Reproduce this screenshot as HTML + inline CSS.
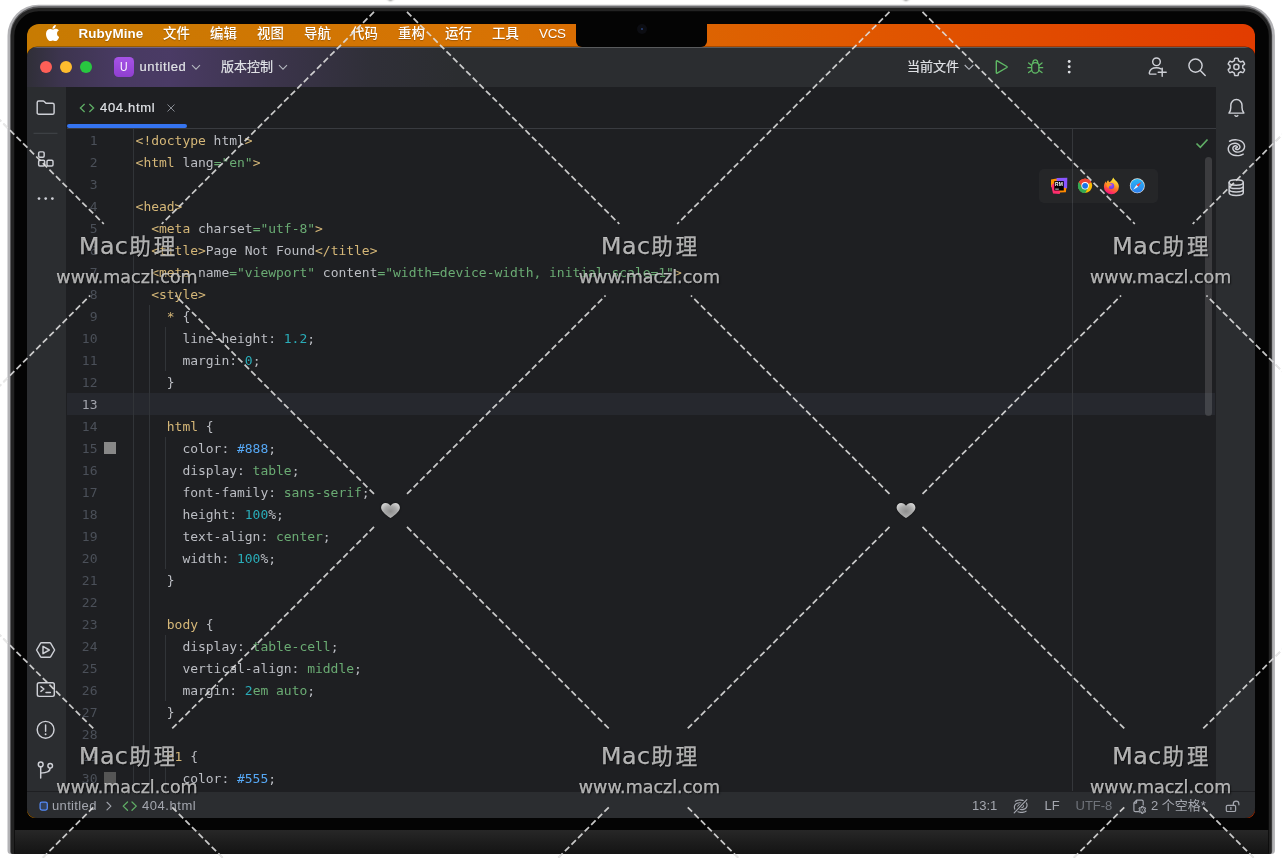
<!DOCTYPE html>
<html lang="zh">
<head>
<meta charset="utf-8">
<title>RubyMine - 404.html</title>
<style>
*{box-sizing:border-box;margin:0;padding:0}
html,body{width:1282px;height:858px;overflow:hidden;background:#fff}
body{position:relative;font-family:"Liberation Sans","Noto Sans CJK SC",sans-serif;font-size:13px;color:#dfe1e5}
.abs{position:absolute}
/* ---------- laptop frame ---------- */
#screen{will-change:transform;left:27px;top:24px;width:1228px;height:794px;border-radius:12px 12px 8px 8px;overflow:hidden;background:linear-gradient(90deg,#c77b02 0,#d87204 40%,#e05a00 65%,#e23c00 100%)}
/* ---------- menu bar ---------- */
#menubar{left:0;top:0;width:1228px;height:23px;color:#fff;text-shadow:0 1px 1px rgba(0,0,0,.25)}
#menubar span{position:absolute;top:-.5px;line-height:19px;font-size:13.4px;white-space:nowrap}
#notch{left:549px;top:-6px;width:131px;height:29px;border-radius:6px;background:#040404}
#cam{left:609.5px;top:0;width:10px;height:10px;border-radius:50%;background:#0c0d12}
#cam:after{content:"";position:absolute;left:4px;top:4px;width:2px;height:2px;border-radius:50%;background:#27407a}
/* ---------- IDE window ---------- */
#win{left:0;top:23px;width:1228px;height:771px;border-radius:10px;overflow:hidden;background:#1e1f22;box-shadow:0 0 0 .5px rgba(0,0,0,.5)}
#title{left:0;top:0;width:1228px;height:40px;background:#2b2d30}
#titleglow{left:0;top:0;width:430px;height:40px;background:linear-gradient(90deg,rgba(86,62,122,.10) 0,rgba(88,64,125,.40) 8%,rgba(90,66,128,.62) 21%,rgba(90,66,128,.66) 33%,rgba(84,63,116,.42) 56%,rgba(70,58,96,.16) 80%,rgba(43,45,48,0) 100%)}
#titletop{left:0;top:0;width:1228px;height:1px;background:rgba(255,255,255,.22)}
.tl{top:13.5px;width:12.5px;height:12.5px;border-radius:50%}
#title .t{-webkit-text-stroke:.2px;position:absolute;top:0;line-height:40px;font-size:13px;color:#dfe1e5;white-space:nowrap;letter-spacing:.62px}
#uicon{left:87px;top:10px;width:20px;height:20px;border-radius:4.5px;background:linear-gradient(180deg,#a653e6,#8f3fd0);color:#fff;font-size:13.4px;line-height:20px;text-align:center}
#uicon b{display:inline-block;font-weight:400;transform:scaleX(.78)}
#lstrip{left:0;top:40px;width:39px;height:704px;background:#2b2d30}
#rstrip{left:1189px;top:40px;width:39px;height:704px;background:#2b2d30}
#tabline{left:40px;top:81px;width:1149px;height:1px;background:#393b40}
#tabsel{left:40px;top:77px;width:120px;height:4px;border-radius:2px;background:#3574f0}
#tab .t{-webkit-text-stroke:.2px;position:absolute;line-height:16px;font-size:13px;color:#dfe1e5;letter-spacing:.7px}
#status{left:0;top:744px;width:1228px;height:27px;background:#2b2d30;border-top:1px solid #1e1f22;color:#a4a7af;font-size:13px}
#status span{position:absolute;top:0;line-height:27px;white-space:nowrap}
/* ---------- editor ---------- */
#editor{left:40px;top:82px;width:1149px;height:662px;overflow:hidden;background:#1e1f22}
#curline{left:0;top:264px;width:1148px;height:22px;background:#26282e}
#gutline{left:66px;top:0;width:1px;height:662px;background:#313438}
#margin{left:1005px;top:0;width:1px;height:662px;background:#35373b}
.guide{width:1px;background:#313438}
#nums{left:0;top:1px;width:30.5px;text-align:right;font-family:"DejaVu Sans Mono","Liberation Mono",monospace;font-size:13px;line-height:22px;color:#4b5059}
#nums b{font-weight:400;color:#a1a3ab}
#code{left:68.6px;top:1px;letter-spacing:-.026px;font-family:"DejaVu Sans Mono","Liberation Mono",monospace;font-size:13px;line-height:22px;color:#bcbec4;white-space:pre}
#code i{font-style:normal}
.g{color:#d5b778}.s{color:#6aab73}.n{color:#2aacb8}.h{color:#56a8f5}
.sw{left:37px;width:12px;height:12px}
#scroll{left:1138px;top:28px;width:7px;height:259px;border-radius:3.5px;background:rgba(255,255,255,.135)}
#browsers{left:972px;top:39.5px;width:119px;height:34.3px;border-radius:5px;background:rgba(255,255,255,.033)}
/* ---------- watermark ---------- */
#wm{left:0;top:0;width:1282px;height:858px;pointer-events:none}
</style>
</head>
<body>
<svg class="abs" style="left:0;top:0" width="1282" height="858" viewBox="0 0 1282 858"><defs><linearGradient id="chg" x1="0" y1="0" x2="0" y2="1"><stop offset="0" stop-color="#272727"/><stop offset=".5" stop-color="#1d1d1d"/><stop offset="1" stop-color="#141414"/></linearGradient></defs><path d="M38.5 4.7H1243.9A31 31 0 0 1 1274.9 35.7V850.5A3.5 3.5 0 0 1 1271.4 854H11.0A3.5 3.5 0 0 1 7.5 850.5V35.7A31 31 0 0 1 38.5 4.7Z" fill="#b2b2b5"/><path d="M39.0 6.2H1243.4A28.8 28.8 0 0 1 1272.2 35.0V851.5A2.5 2.5 0 0 1 1269.7 854H12.7A2.5 2.5 0 0 1 10.2 851.5V35.0A28.8 28.8 0 0 1 39.0 6.2Z" fill="#5a5a5c"/><path d="M38.8 7.9H1243.6A28 28 0 0 1 1271.6 35.9V852A2 2 0 0 1 1269.6 854H12.8A2 2 0 0 1 10.8 852V35.9A28 28 0 0 1 38.8 7.9Z" fill="#232323"/><path d="M38.8 11.2H1244.3A24.5 24.5 0 0 1 1268.8 35.7V853A1 1 0 0 1 1267.8 854H15.3A1 1 0 0 1 14.3 853V35.7A24.5 24.5 0 0 1 38.8 11.2Z" fill="#040404"/><rect x="14.800" y="830" width="1253.400" height="24" fill="url(#chg)"/></svg>
<div id="screen" class="abs">
  <div id="menubar" class="abs">
    <svg class="abs" style="left:18.5px;top:1px" width="13.2" height="16.2" viewBox="0 -8 814 1008" preserveAspectRatio="none"><path fill="#fff" d="M788 341c-6 4-108 62-108 190 0 148 130 201 134 202-1 3-21 72-69 142-43 62-88 124-156 124s-86-40-165-40c-77 0-104 41-167 41s-106-57-156-127C43 790 0 660 0 537c0-198 129-303 255-303 67 0 123 44 165 44 40 0 103-47 179-47 29 0 133 3 201 110zM551 156c32-38 54-90 54-142 0-7-1-15-2-20-51 2-112 34-149 77-29 33-56 85-56 138 0 8 1 16 2 18 3 1 8 2 14 2 46 0 104-31 137-73z"/></svg>
    <span style="left:51.5px;font-weight:700;letter-spacing:.1px">RubyMine</span>
    <span style="left:136px;font-weight:500">文件</span>
    <span style="left:183px;font-weight:500">编辑</span>
    <span style="left:230px;font-weight:500">视图</span>
    <span style="left:277px;font-weight:500">导航</span>
    <span style="left:324px;font-weight:500">代码</span>
    <span style="left:371px;font-weight:500">重构</span>
    <span style="left:418px;font-weight:500">运行</span>
    <span style="left:465px;font-weight:500">工具</span>
    <span style="left:512px;letter-spacing:-.3px">VCS</span>
    <div id="notch" class="abs"></div>
    <div id="cam" class="abs"></div>
  </div>
  <div id="win" class="abs">
    <div id="title" class="abs">
      <div id="titleglow" class="abs"></div>
      <div id="titletop" class="abs"></div>
      <div class="abs tl" style="left:12.5px;background:#fe5f57"></div>
      <div class="abs tl" style="left:32.5px;background:#febc2e"></div>
      <div class="abs tl" style="left:52.5px;background:#28c840"></div>
      <div id="uicon" class="abs"><b>U</b></div>
      <span class="t" style="left:112.5px">untitled</span>
      <svg class="abs" style="left:164px;top:15px" width="10" height="10" viewBox="0 0 10 10"><path d="M1 3.2l4 4 4-4" fill="none" stroke="#b4b8bf" stroke-width="1.1"/></svg>
      <span class="t" style="left:194px;letter-spacing:0">版本控制</span>
      <svg class="abs" style="left:251px;top:15px" width="10" height="10" viewBox="0 0 10 10"><path d="M1 3.2l4 4 4-4" fill="none" stroke="#b4b8bf" stroke-width="1.1"/></svg>
      <span class="t" style="left:880px;letter-spacing:0">当前文件</span>
      <svg class="abs" style="left:936.5px;top:15px" width="10" height="10" viewBox="0 0 10 10"><path d="M.7 3l4.3 4.3L9.300 3" fill="none" stroke="#b4b8bf" stroke-width="1.1"/></svg>
      
    </div>
    <div id="lstrip" class="abs"><!-- LEFT-ICONS --></div>
    <div id="rstrip" class="abs"><!-- RIGHT-ICONS --></div>
    <div id="tab" class="abs" style="left:40px;top:40px;width:1149px;height:41px">
      <svg class="abs" style="left:12px;top:15.5px" width="16" height="10" viewBox="0 0 16 10"><path d="M5.6 1L1.4 5l4.200 4M10.400 1l4.200 4-4.200 4" fill="none" stroke="#5fad65" stroke-width="1.3"/></svg>
      <span class="t" style="left:33px;top:13px">404.html</span>
      <svg class="abs" style="left:99px;top:16px" width="10" height="10" viewBox="0 0 10 10"><path d="M1.500 1.500l7 7M8.500 1.500l-7 7" fill="none" stroke="#868a91" stroke-width="1"/></svg>
    </div>
    <div id="tabline" class="abs"></div>
    <div id="tabsel" class="abs"></div>
    <div id="editor" class="abs"><div id="curline" class="abs"></div>
      <div id="gutline" class="abs"></div>
      <div id="margin" class="abs"></div>
      <div class="abs guide" style="left:82px;top:176px;height:486px"></div>
      <div class="abs guide" style="left:98px;top:198px;height:44px"></div>
      <div class="abs guide" style="left:98px;top:308px;height:132px"></div>
      <div class="abs guide" style="left:98px;top:506px;height:66px"></div>
      <div class="abs guide" style="left:98px;top:638px;height:24px"></div>
      <div id="nums" class="abs">1<br>2<br>3<br>4<br>5<br>6<br>7<br>8<br>9<br>10<br>11<br>12<br><b>13</b><br>14<br>15<br>16<br>17<br>18<br>19<br>20<br>21<br>22<br>23<br>24<br>25<br>26<br>27<br>28<br>29<br>30<br>31</div>
      <div class="abs sw" style="top:313px;background:#888"></div>
      <div class="abs sw" style="top:643px;background:#555"></div>
<pre id="code" class="abs"><i class="g">&lt;!doctype</i> html<i class="g">&gt;</i>
<i class="g">&lt;html</i> lang<i class="s">="en"</i><i class="g">&gt;</i>

<i class="g">&lt;head&gt;</i>
  <i class="g">&lt;meta</i> charset<i class="s">="utf-8"</i><i class="g">&gt;</i>
  <i class="g">&lt;title&gt;</i>Page Not Found<i class="g">&lt;/title&gt;</i>
  <i class="g">&lt;meta</i> name<i class="s">="viewport"</i> content<i class="s">="width=device-width, initial-scale=1"</i><i class="g">&gt;</i>
  <i class="g">&lt;style&gt;</i>
    <i class="g">*</i> {
      line-height: <i class="n">1.2</i>;
      margin: <i class="n">0</i>;
    }

    <i class="g">html</i> {
      color: <i class="h">#888</i>;
      display: <i class="s">table</i>;
      font-family: <i class="s">sans-serif</i>;
      height: <i class="n">100</i>%;
      text-align: <i class="s">center</i>;
      width: <i class="n">100</i>%;
    }

    <i class="g">body</i> {
      display: <i class="s">table-cell</i>;
      vertical-align: <i class="s">middle</i>;
      margin: <i class="n">2</i><i class="s">em auto</i>;
    }

    <i class="g">h1</i> {
      color: <i class="h">#555</i>;
      font-size: <i class="n">2</i><i class="s">em</i>;</pre>
      <div id="scroll" class="abs"></div>
      <svg class="abs" style="left:1128px;top:8.5px" width="14" height="11" viewBox="0 0 14 11"><path d="M1.500 5.500l3.800 3.800L12.500 1.500" fill="none" stroke="#5fad65" stroke-width="1.700"/></svg>
      <div id="browsers" class="abs"><svg class="abs" style="left:0;top:0" width="119" height="34.5" viewBox="1039 169 119 34.5">
<defs>
<linearGradient id="ffg" x1=".7" y1="0" x2=".3" y2="1"><stop offset="0" stop-color="#fff23a"/><stop offset=".3" stop-color="#ffbd2e"/><stop offset=".6" stop-color="#ff6a2b"/><stop offset=".85" stop-color="#ff2a66"/><stop offset="1" stop-color="#e31587"/></linearGradient>
<radialGradient id="ffp" cx=".5" cy=".35" r=".7"><stop offset="0" stop-color="#b44bff"/><stop offset="1" stop-color="#5b3fe0"/></radialGradient>
<linearGradient id="sfg" x1="0" y1="0" x2="0" y2="1"><stop offset="0" stop-color="#27b7f5"/><stop offset="1" stop-color="#2c7ff0"/></linearGradient>
</defs>
<!-- RubyMine -->
<path d="M1051 179.400l5.800-.9 1.200 4-4.800 5.500-2.200-1.200z" fill="#ff9100"/>
<path d="M1056.600 178l10.700-.2-.2 10.500-4.200 1.200-6.300-6z" fill="#8a55ff"/>
<path d="M1051.200 185.500l3.500-3 6 7 -1 4.400-6.700-.3z" fill="#ff2d6e"/>
<path d="M1059.500 187.300l6.800.6-.4 4.300-6.200.2z" fill="#ff8a00"/>
<rect x="1054.300" y="181.100" width="9.500" height="9.400" fill="#000"/>
<text x="1055.100" y="185.900" font-family="'Liberation Sans',sans-serif" font-weight="700" font-size="4.700" fill="#fff" textLength="7.700" lengthAdjust="spacingAndGlyphs">RM</text>
<rect x="1055.200" y="188.700" width="3.600" height=".8" fill="#fff"/>
<!-- Chrome -->
<g transform="translate(1085.100 185.800)">
<circle r="7.100" fill="#fbbc04"/>
<path d="M0 0L-6.150-3.550A7.100 7.100 0 0 1 6.150-3.550z" fill="#ea4335"/>
<path d="M-6.150-3.550A7.100 7.100 0 0 1 6.150-3.550L6.150-3.500 0-3.500z" fill="#ea4335"/>
<path d="M0 0L-6.150-3.550A7.100 7.100 0 0 0 0 7.100z" fill="#34a853"/>
<path d="M0 0L0 7.100A7.100 7.100 0 0 1-6.150-3.550L-3.100-1.800z" fill="#34a853"/>
<path d="M0-3.600h6.130A7.100 7.100 0 0 0-6.150-3.550L-3.100 1.750z" fill="#ea4335"/>
<path d="M-3.100 1.750L-6.150-3.550A7.100 7.100 0 0 0 .1 7.100L3.150 1.800z" fill="#34a853"/>
<circle r="3.700" fill="#fff"/><circle r="2.900" fill="#1a73e8"/>
</g>
<!-- Firefox -->
<g>
<path d="M1113.400 177.600c.3 1.500 1.600 2.300 2.800 3.500 1.700 1.700 2.700 3.500 2.700 5.700a7.500 7.500 0 0 1-15 0c0-2.200.7-4.200 2-5.600-.1.900.1 1.600.5 2.100.2-1.300.9-2.300 1.900-3 .1.900.5 1.600 1.200 2 1.200-.7 2.100-1.700 2.700-2.800.5-.8.900-1.400 1.200-1.900z" fill="url(#ffg)"/>
<circle cx="1111.200" cy="185.900" r="3" fill="url(#ffp)"/>
<path d="M1106.700 183.200c1.300-.5 2.800-.3 3.900.5.900.6 1.300 1.100 2 1.100-.8.600-1.800.6-2.600.9-1.100.4-1.500 1.500-1.100 2.500-1.700-.6-2.900-2.600-2.200-5z" fill="#ff9a1f"/>
</g>
<!-- Safari -->
<g transform="translate(1137.300 185.800)">
<circle r="7.500" fill="#e9e7e2"/><circle r="6.850" fill="url(#sfg)"/>
<path d="M4.300-3.900L.9.900-.9-.8z" fill="#ff3b30"/><path d="M-4.100 4L.9.900-.9-.8z" fill="#f4f4f4"/>
</g>
</svg></div>
</div>
    <div id="status" class="abs"><span style="left:25px;letter-spacing:.35px">untitled</span><span style="left:115px;letter-spacing:.55px">404.html</span>
      <span style="left:945px">13:1</span><span style="left:1017.5px">LF</span><span style="left:1048.5px;color:#6f737a">UTF-8</span><span style="left:1124px">2 个空格*</span>
      <svg class="abs" style="left:0;top:-1px" width="1228" height="27" viewBox="27 790 1228 27" fill="none" stroke="#a4a7af" stroke-width="1.2" stroke-linecap="round" stroke-linejoin="round">
      <rect x="40.100" y="801.200" width="7.200" height="7.900" rx="1.800" stroke="#548af7" fill="rgba(84,138,247,.22)" stroke-width="1.300"/>
      <path d="M107 801.300l3.900 3.800-3.900 3.800" stroke="#9da0a8"/>
      <path d="M127.500 801l-4.300 4.100 4.300 4.100M132 801l4.300 4.100-4.300 4.100" stroke="#5fad65" stroke-width="1.300"/>
      <g transform="translate(1020.7 805.200) scale(.78)" stroke-width="1.500"><path d="M-6.86 -6.43C-6.31 -6.64 -4.79 -7.44 -3.59 -7.67C-2.39 -7.91 -0.98 -7.97 0.33 -7.84C1.63 -7.70 3.10 -7.43 4.24 -6.86C5.39 -6.28 6.53 -5.36 7.18 -4.41C7.84 -3.46 8.16 -2.18 8.16 -1.14C8.16 -0.11 7.78 0.98 7.18 1.80C6.58 2.61 5.55 3.32 4.57 3.75C3.59 4.19 2.34 4.43 1.31 4.41C0.27 4.38 -0.86 4.04 -1.63 3.59C-2.41 3.15 -3.05 2.38 -3.33 1.73C-3.61 1.08 -3.59 0.25 -3.33 -0.33C-3.07 -0.90 -2.41 -1.51 -1.80 -1.73C-1.19 -1.95 -0.14 -1.81 0.33 -1.63C0.79 -1.45 1.03 -0.93 0.98 -0.65C0.93 -0.38 0.16 -0.11 0.00 0.00"/><path transform="rotate(180)" d="M-6.86 -6.43C-6.31 -6.64 -4.79 -7.44 -3.59 -7.67C-2.39 -7.91 -0.98 -7.97 0.33 -7.84C1.63 -7.70 3.10 -7.43 4.24 -6.86C5.39 -6.28 6.53 -5.36 7.18 -4.41C7.84 -3.46 8.16 -2.18 8.16 -1.14C8.16 -0.11 7.78 0.98 7.18 1.80C6.58 2.61 5.55 3.32 4.57 3.75C3.59 4.19 2.34 4.43 1.31 4.41C0.27 4.38 -0.86 4.04 -1.63 3.59C-2.41 3.15 -3.05 2.38 -3.33 1.73C-3.61 1.08 -3.59 0.25 -3.33 -0.33C-3.07 -0.90 -2.41 -1.51 -1.80 -1.73C-1.19 -1.95 -0.14 -1.81 0.33 -1.63C0.79 -1.45 1.03 -0.93 0.98 -0.65C0.93 -0.38 0.16 -0.11 0.00 0.00"/></g>
      <path d="M1014.300 811.700l12.500-13" stroke="#2b2d30" stroke-width="3.200"/><path d="M1014.200 811.800l12.700-13.200" stroke-width="1.200"/>
      <path d="M1138.500 810.700h-3.100a1.500 1.500 0 0 1-1.500-1.500v-7.300l2.700-2.700h5.100a1.500 1.500 0 0 1 1.500 1.500v3.300M1133.900 802.200h1.700a1 1 0 0 0 1-1v-2"/>
      <path d="M1144.65 808.90 L1144.64 808.75 L1144.63 808.59 L1144.65 808.43 L1145.10 808.15 L1145.52 807.81 L1145.49 807.58 L1145.39 807.37 L1145.29 807.17 L1145.17 806.98 L1145.04 806.80 L1144.86 806.66 L1144.35 806.85 L1143.88 807.10 L1143.73 807.04 L1143.61 806.95 L1143.47 806.86 L1143.34 806.79 L1143.20 806.73 L1143.07 806.63 L1143.05 806.10 L1142.96 805.57 L1142.75 805.48 L1142.53 805.46 L1142.30 805.45 L1142.07 805.46 L1141.85 805.48 L1141.64 805.57 L1141.55 806.10 L1141.53 806.63 L1141.40 806.73 L1141.26 806.79 L1141.12 806.86 L1140.99 806.95 L1140.87 807.04 L1140.72 807.10 L1140.25 806.85 L1139.74 806.66 L1139.56 806.80 L1139.43 806.98 L1139.31 807.17 L1139.21 807.37 L1139.11 807.58 L1139.08 807.81 L1139.50 808.15 L1139.95 808.43 L1139.97 808.59 L1139.96 808.75 L1139.95 808.90 L1139.96 809.05 L1139.97 809.21 L1139.95 809.37 L1139.50 809.65 L1139.08 809.99 L1139.11 810.22 L1139.21 810.43 L1139.31 810.62 L1139.43 810.82 L1139.56 811.00 L1139.74 811.14 L1140.25 810.95 L1140.72 810.70 L1140.87 810.76 L1140.99 810.85 L1141.12 810.94 L1141.26 811.01 L1141.40 811.07 L1141.53 811.17 L1141.55 811.70 L1141.64 812.23 L1141.85 812.32 L1142.07 812.34 L1142.30 812.35 L1142.53 812.34 L1142.75 812.32 L1142.96 812.23 L1143.05 811.70 L1143.07 811.17 L1143.20 811.07 L1143.34 811.01 L1143.47 810.94 L1143.61 810.85 L1143.73 810.76 L1143.88 810.70 L1144.35 810.95 L1144.86 811.14 L1145.04 811.00 L1145.17 810.82 L1145.29 810.62 L1145.39 810.43 L1145.49 810.22 L1145.52 809.99 L1145.10 809.65 L1144.65 809.37 L1144.63 809.21 L1144.64 809.05Z" stroke-width="1.100"/><circle cx="1142.300" cy="808.900" r=".7" fill="#a4a7af" stroke="none"/>
      <rect x="1226.300" y="804.300" width="9.300" height="6.200" rx="1.300"/><path d="M1230.900 806.300v2.200M1233.300 804.200v-1.300a2.800 2.800 0 0 1 5.600 0v.9"/>
      </svg></div>
<svg class="abs" style="left:0;top:0" width="1228" height="771" viewBox="27 47 1228 771" fill="none" stroke="#ced0d6" stroke-width="1.45" stroke-linecap="round" stroke-linejoin="round">
<!-- run / debug / more -->
<path d="M996.3 61.300v11.400a.6.6 0 0 0 .9.500l9.700-5.700a.6.6 0 0 0 0-1l-9.700-5.700a.6.6 0 0 0-.9.500z" stroke="#5fb865" stroke-width="1.400"/>
<g stroke="#5fb865" stroke-width="1.300"><path d="M1031.700 66.200c0-2.100 1.600-3.500 3.600-3.500s3.600 1.400 3.600 3.500v3c0 2.200-1.600 3.900-3.600 3.900s-3.600-1.700-3.600-3.900z"/><path d="M1032.900 62.800c0-1.600 1-2.900 2.400-2.900s2.400 1.300 2.400 2.900"/><path d="M1031.500 65.200l-2.900-2.200M1031.500 67.700h-3.600M1031.500 70.400l-2.900 2.200M1039.100 65.200l2.900-2.200M1039.100 67.700h3.600M1039.100 70.400l2.900 2.200"/></g>
<g fill="#dfe1e5" stroke="none"><circle cx="1069.200" cy="61.500" r="1.450"/><circle cx="1069.200" cy="66.800" r="1.450"/><circle cx="1069.200" cy="72.100" r="1.450"/></g>
<!-- add user / search / settings -->
<circle cx="1156.500" cy="61.800" r="3.800"/><path d="M1156 74.100h-5.600c-.7 0-1.200-.6-1.100-1.300.5-3 3.300-5.100 7.200-5.100 1.700 0 3.200.4 4.400 1.100M1162.200 68.300v8M1158.200 72.300h8"/>
<circle cx="1195.500" cy="65.600" r="6.600"/><path d="M1200.300 70.500l4.900 5"/>
<path d="M1242.80 66.90 L1242.79 66.62 L1242.78 66.34 L1242.75 66.06 L1242.71 65.79 L1242.99 65.44 L1243.69 64.95 L1244.37 64.39 L1244.57 63.93 L1244.44 63.57 L1244.28 63.22 L1244.12 62.88 L1243.93 62.55 L1243.74 62.23 L1243.53 61.91 L1243.30 61.60 L1243.06 61.31 L1242.56 61.26 L1241.74 61.56 L1240.96 61.93 L1240.52 61.99 L1240.30 61.82 L1240.07 61.66 L1239.84 61.50 L1239.60 61.36 L1239.36 61.22 L1239.10 61.10 L1238.85 60.99 L1238.59 60.88 L1238.43 60.46 L1238.35 59.61 L1238.21 58.75 L1237.91 58.34 L1237.54 58.27 L1237.16 58.23 L1236.78 58.21 L1236.40 58.20 L1236.02 58.21 L1235.64 58.23 L1235.26 58.27 L1234.89 58.34 L1234.59 58.75 L1234.45 59.61 L1234.37 60.46 L1234.21 60.88 L1233.95 60.99 L1233.70 61.10 L1233.44 61.22 L1233.20 61.36 L1232.96 61.50 L1232.73 61.66 L1232.50 61.82 L1232.28 61.99 L1231.84 61.93 L1231.06 61.56 L1230.24 61.26 L1229.74 61.31 L1229.50 61.60 L1229.27 61.91 L1229.06 62.23 L1228.87 62.55 L1228.68 62.88 L1228.52 63.22 L1228.36 63.57 L1228.23 63.93 L1228.43 64.39 L1229.11 64.95 L1229.81 65.44 L1230.09 65.79 L1230.05 66.06 L1230.02 66.34 L1230.01 66.62 L1230.00 66.90 L1230.01 67.18 L1230.02 67.46 L1230.05 67.74 L1230.09 68.01 L1229.81 68.36 L1229.11 68.85 L1228.43 69.41 L1228.23 69.87 L1228.36 70.23 L1228.52 70.58 L1228.68 70.92 L1228.87 71.25 L1229.06 71.57 L1229.27 71.89 L1229.50 72.20 L1229.74 72.49 L1230.24 72.54 L1231.06 72.24 L1231.84 71.87 L1232.28 71.81 L1232.50 71.98 L1232.73 72.14 L1232.96 72.30 L1233.20 72.44 L1233.44 72.58 L1233.70 72.70 L1233.95 72.81 L1234.21 72.92 L1234.37 73.34 L1234.45 74.19 L1234.59 75.05 L1234.89 75.46 L1235.26 75.53 L1235.64 75.57 L1236.02 75.59 L1236.40 75.60 L1236.78 75.59 L1237.16 75.57 L1237.54 75.53 L1237.91 75.46 L1238.21 75.05 L1238.35 74.19 L1238.43 73.34 L1238.59 72.92 L1238.85 72.81 L1239.10 72.70 L1239.36 72.58 L1239.60 72.44 L1239.84 72.30 L1240.07 72.14 L1240.30 71.98 L1240.52 71.81 L1240.96 71.87 L1241.74 72.24 L1242.56 72.54 L1243.06 72.49 L1243.30 72.20 L1243.53 71.89 L1243.74 71.57 L1243.93 71.25 L1244.12 70.92 L1244.28 70.58 L1244.44 70.23 L1244.57 69.87 L1244.37 69.41 L1243.69 68.85 L1242.99 68.36 L1242.71 68.01 L1242.75 67.74 L1242.78 67.46 L1242.79 67.18Z"/><circle cx="1236.400" cy="66.900" r="2.600"/>
<!-- left strip -->
<path d="M37.200 102.500a1.600 1.600 0 0 1 1.600-1.600h4.300c.4 0 .8.200 1.100.5l1.800 1.800h6.500a1.600 1.600 0 0 1 1.600 1.600v7.900a1.600 1.600 0 0 1-1.600 1.600h-13.700a1.600 1.600 0 0 1-1.600-1.600z"/>
<path d="M33.500 133.300h24" stroke="#43454a" stroke-width="1" stroke-linecap="butt"/>
<rect x="38.650" y="151.850" width="5.500" height="5.400" rx="1.200"/><rect x="38.650" y="160.300" width="6" height="5.600" rx="1.200"/><rect x="47" y="160.300" width="6" height="5.600" rx="1.200"/>
<g fill="#ced0d6" stroke="none"><circle cx="39" cy="198.600" r="1.350"/><circle cx="45.700" cy="198.600" r="1.350"/><circle cx="52.400" cy="198.600" r="1.350"/></g>
<path d="M36.600 650l4-6.800a.9.900 0 0 1 .8-.5h8.400a.9.900 0 0 1 .8.500l4 6.800-4 6.800a.9.900 0 0 1-.8.500h-8.400a.9.900 0 0 1-.8-.5zM43 646.300v7.400l6.300-3.700z"/>
<rect x="37.300" y="682.800" width="17" height="13.600" rx="1.800"/><path d="M40.900 686.600l3 2.400-3 2.400M46 692.400h4.400"/>
<circle cx="45.600" cy="729.800" r="8.400"/><path d="M45.600 725v6.200"/><circle cx="45.600" cy="734.200" r=".95" fill="#ced0d6" stroke="none"/>
<circle cx="40.700" cy="764.400" r="2.400"/><circle cx="50.200" cy="765.800" r="2.300"/><path d="M40.700 766.800v11.300M50.200 768.100c0 3.600-3.400 5-9.500 5"/>
<!-- right strip -->
<path d="M1229 113.100h14.900c-1.500-1.500-1.900-3-1.900-5.500v-2.300c0-3.300-2.500-5.800-5.600-5.800s-5.600 2.500-5.600 5.800v2.300c0 2.500-.4 4-1.800 5.500z"/><path d="M1235 115.600c.4.500.9.700 1.400.7s1-.2 1.400-.7" />
<g transform="translate(1236.4 147.7)"><path d="M-6.86 -6.43C-6.31 -6.64 -4.79 -7.44 -3.59 -7.67C-2.39 -7.91 -0.98 -7.97 0.33 -7.84C1.63 -7.70 3.10 -7.43 4.24 -6.86C5.39 -6.28 6.53 -5.36 7.18 -4.41C7.84 -3.46 8.16 -2.18 8.16 -1.14C8.16 -0.11 7.78 0.98 7.18 1.80C6.58 2.61 5.55 3.32 4.57 3.75C3.59 4.19 2.34 4.43 1.31 4.41C0.27 4.38 -0.86 4.04 -1.63 3.59C-2.41 3.15 -3.05 2.38 -3.33 1.73C-3.61 1.08 -3.59 0.25 -3.33 -0.33C-3.07 -0.90 -2.41 -1.51 -1.80 -1.73C-1.19 -1.95 -0.14 -1.81 0.33 -1.63C0.79 -1.45 1.03 -0.93 0.98 -0.65C0.93 -0.38 0.16 -0.11 0.00 0.00"/><path transform="rotate(180)" d="M-6.86 -6.43C-6.31 -6.64 -4.79 -7.44 -3.59 -7.67C-2.39 -7.91 -0.98 -7.97 0.33 -7.84C1.63 -7.70 3.10 -7.43 4.24 -6.86C5.39 -6.28 6.53 -5.36 7.18 -4.41C7.84 -3.46 8.16 -2.18 8.16 -1.14C8.16 -0.11 7.78 0.98 7.18 1.80C6.58 2.61 5.55 3.32 4.57 3.75C3.59 4.19 2.34 4.43 1.31 4.41C0.27 4.38 -0.86 4.04 -1.63 3.59C-2.41 3.15 -3.05 2.38 -3.33 1.73C-3.61 1.08 -3.59 0.25 -3.33 -0.33C-3.07 -0.90 -2.41 -1.51 -1.80 -1.73C-1.19 -1.95 -0.14 -1.81 0.33 -1.63C0.79 -1.45 1.03 -0.93 0.98 -0.65C0.93 -0.38 0.16 -0.11 0.00 0.00"/></g>
<ellipse cx="1236.200" cy="182.500" rx="7.100" ry="2.700"/><path d="M1229.100 182.500v10.200c0 1.500 3.200 2.700 7.100 2.700s7.100-1.200 7.100-2.700v-10.200M1229.100 185.900c0 1.500 3.200 2.700 7.100 2.700s7.100-1.200 7.100-2.700M1229.100 189.300c0 1.500 3.200 2.700 7.100 2.700s7.100-1.200 7.100-2.700"/>
</svg>
  </div>
</div>
<!--WM--><svg id="wm" class="abs" width="1282" height="858" viewBox="0 0 1282 858">
<defs><radialGradient id="hg" cx="50%" cy="55%" r="60%"><stop offset="0" stop-color="#8e8e8e"/><stop offset=".55" stop-color="#a9a9a9"/><stop offset="1" stop-color="#d4d4d4"/></radialGradient></defs>
<g fill="none" stroke="#ececec" stroke-opacity=".84" stroke-width="1.75" stroke-dasharray="6.2 3.1" style="filter:drop-shadow(0 0 .7px rgba(0,0,0,.22))">
<path d="M-108.5 11.9L103.8 224.0"/>
<path d="M-108.5 493.9L90.1 295.5"/>
<path d="M-108.5 526.9L94.8 730.0"/>
<path d="M-108.5 1008.9L93.6 807.0"/>
<path d="M374.0 11.9L161.7 224.0"/>
<path d="M407.0 11.9L619.3 224.0"/>
<path d="M374.0 493.9L175.4 295.5"/>
<path d="M374.0 526.9L170.7 730.0"/>
<path d="M407.0 493.9L605.6 295.5"/>
<path d="M407.0 526.9L610.3 730.0"/>
<path d="M374.0 1008.9L171.9 807.0"/>
<path d="M407.0 1008.9L609.1 807.0"/>
<path d="M889.5 11.9L677.2 224.0"/>
<path d="M922.5 11.9L1134.8 224.0"/>
<path d="M889.5 493.9L690.9 295.5"/>
<path d="M889.5 526.9L686.2 730.0"/>
<path d="M922.5 493.9L1121.1 295.5"/>
<path d="M922.5 526.9L1125.8 730.0"/>
<path d="M889.5 1008.9L687.4 807.0"/>
<path d="M922.5 1008.9L1124.6 807.0"/>
<path d="M1405.0 11.9L1192.7 224.0"/>
<path d="M1405.0 493.9L1206.4 295.5"/>
<path d="M1405.0 526.9L1201.7 730.0"/>
<path d="M1405.0 1008.9L1202.9 807.0"/>
</g>
<g fill="url(#hg)" style="filter:drop-shadow(0 .5px 1px rgba(0,0,0,.55))">
<path transform="translate(390.5 -6.8)" d="M0 7.700C-5.800 3.600-9.400 .4-9.400-3-9.400-5.600-7.300-7.500-4.900-7.500-2.900-7.500-1-6.400 0-4.600 1-6.400 2.900-7.500 4.900-7.500 7.300-7.500 9.400-5.600 9.400-3 9.400 .4 5.800 3.600 0 7.700Z"/>
<path transform="translate(390.5 510.4)" d="M0 7.700C-5.800 3.600-9.400 .4-9.400-3-9.400-5.600-7.300-7.500-4.900-7.500-2.900-7.500-1-6.400 0-4.600 1-6.400 2.900-7.500 4.900-7.500 7.300-7.500 9.400-5.600 9.400-3 9.400 .4 5.800 3.600 0 7.700Z"/>
<path transform="translate(906.0 -6.8)" d="M0 7.700C-5.800 3.600-9.400 .4-9.400-3-9.400-5.600-7.300-7.500-4.900-7.500-2.900-7.500-1-6.400 0-4.600 1-6.400 2.900-7.500 4.900-7.500 7.300-7.500 9.400-5.600 9.400-3 9.400 .4 5.800 3.600 0 7.700Z"/>
<path transform="translate(906.0 510.4)" d="M0 7.700C-5.800 3.600-9.400 .4-9.400-3-9.400-5.600-7.300-7.500-4.900-7.500-2.900-7.500-1-6.400 0-4.600 1-6.400 2.900-7.500 4.900-7.500 7.300-7.500 9.400-5.600 9.400-3 9.400 .4 5.800 3.600 0 7.700Z"/>
</g>
<g fill="#d2d2d2" fill-opacity=".9" stroke="#d2d2d2" stroke-opacity=".9" stroke-width=".25" font-family="'DejaVu Sans','Noto Sans CJK SC',sans-serif" style="text-shadow:1px 1px 1.5px rgba(0,0,0,.6)">
<text x="79.0" y="253.9"><tspan font-size="23.700" letter-spacing=".45">Mac</tspan><tspan font-size="21.500" letter-spacing="3" dx=".9">助理</tspan></text>
<text x="127.0" y="283.0" font-size="17.500" text-anchor="middle">www.maczl.com</text>
<text x="79.0" y="763.9"><tspan font-size="23.700" letter-spacing=".45">Mac</tspan><tspan font-size="21.500" letter-spacing="3" dx=".9">助理</tspan></text>
<text x="127.0" y="793.0" font-size="17.500" text-anchor="middle">www.maczl.com</text>
<text x="601.1" y="253.9"><tspan font-size="23.700" letter-spacing=".45">Mac</tspan><tspan font-size="21.500" letter-spacing="3" dx=".9">助理</tspan></text>
<text x="649.4" y="283.0" font-size="17.500" text-anchor="middle">www.maczl.com</text>
<text x="601.1" y="763.9"><tspan font-size="23.700" letter-spacing=".45">Mac</tspan><tspan font-size="21.500" letter-spacing="3" dx=".9">助理</tspan></text>
<text x="649.4" y="793.0" font-size="17.500" text-anchor="middle">www.maczl.com</text>
<text x="1112.3" y="253.9"><tspan font-size="23.700" letter-spacing=".45">Mac</tspan><tspan font-size="21.500" letter-spacing="3" dx=".9">助理</tspan></text>
<text x="1160.7" y="283.0" font-size="17.500" text-anchor="middle">www.maczl.com</text>
<text x="1112.3" y="763.9"><tspan font-size="23.700" letter-spacing=".45">Mac</tspan><tspan font-size="21.500" letter-spacing="3" dx=".9">助理</tspan></text>
<text x="1160.7" y="793.0" font-size="17.500" text-anchor="middle">www.maczl.com</text>
</g></svg><!--/WM-->
</body>
</html>
